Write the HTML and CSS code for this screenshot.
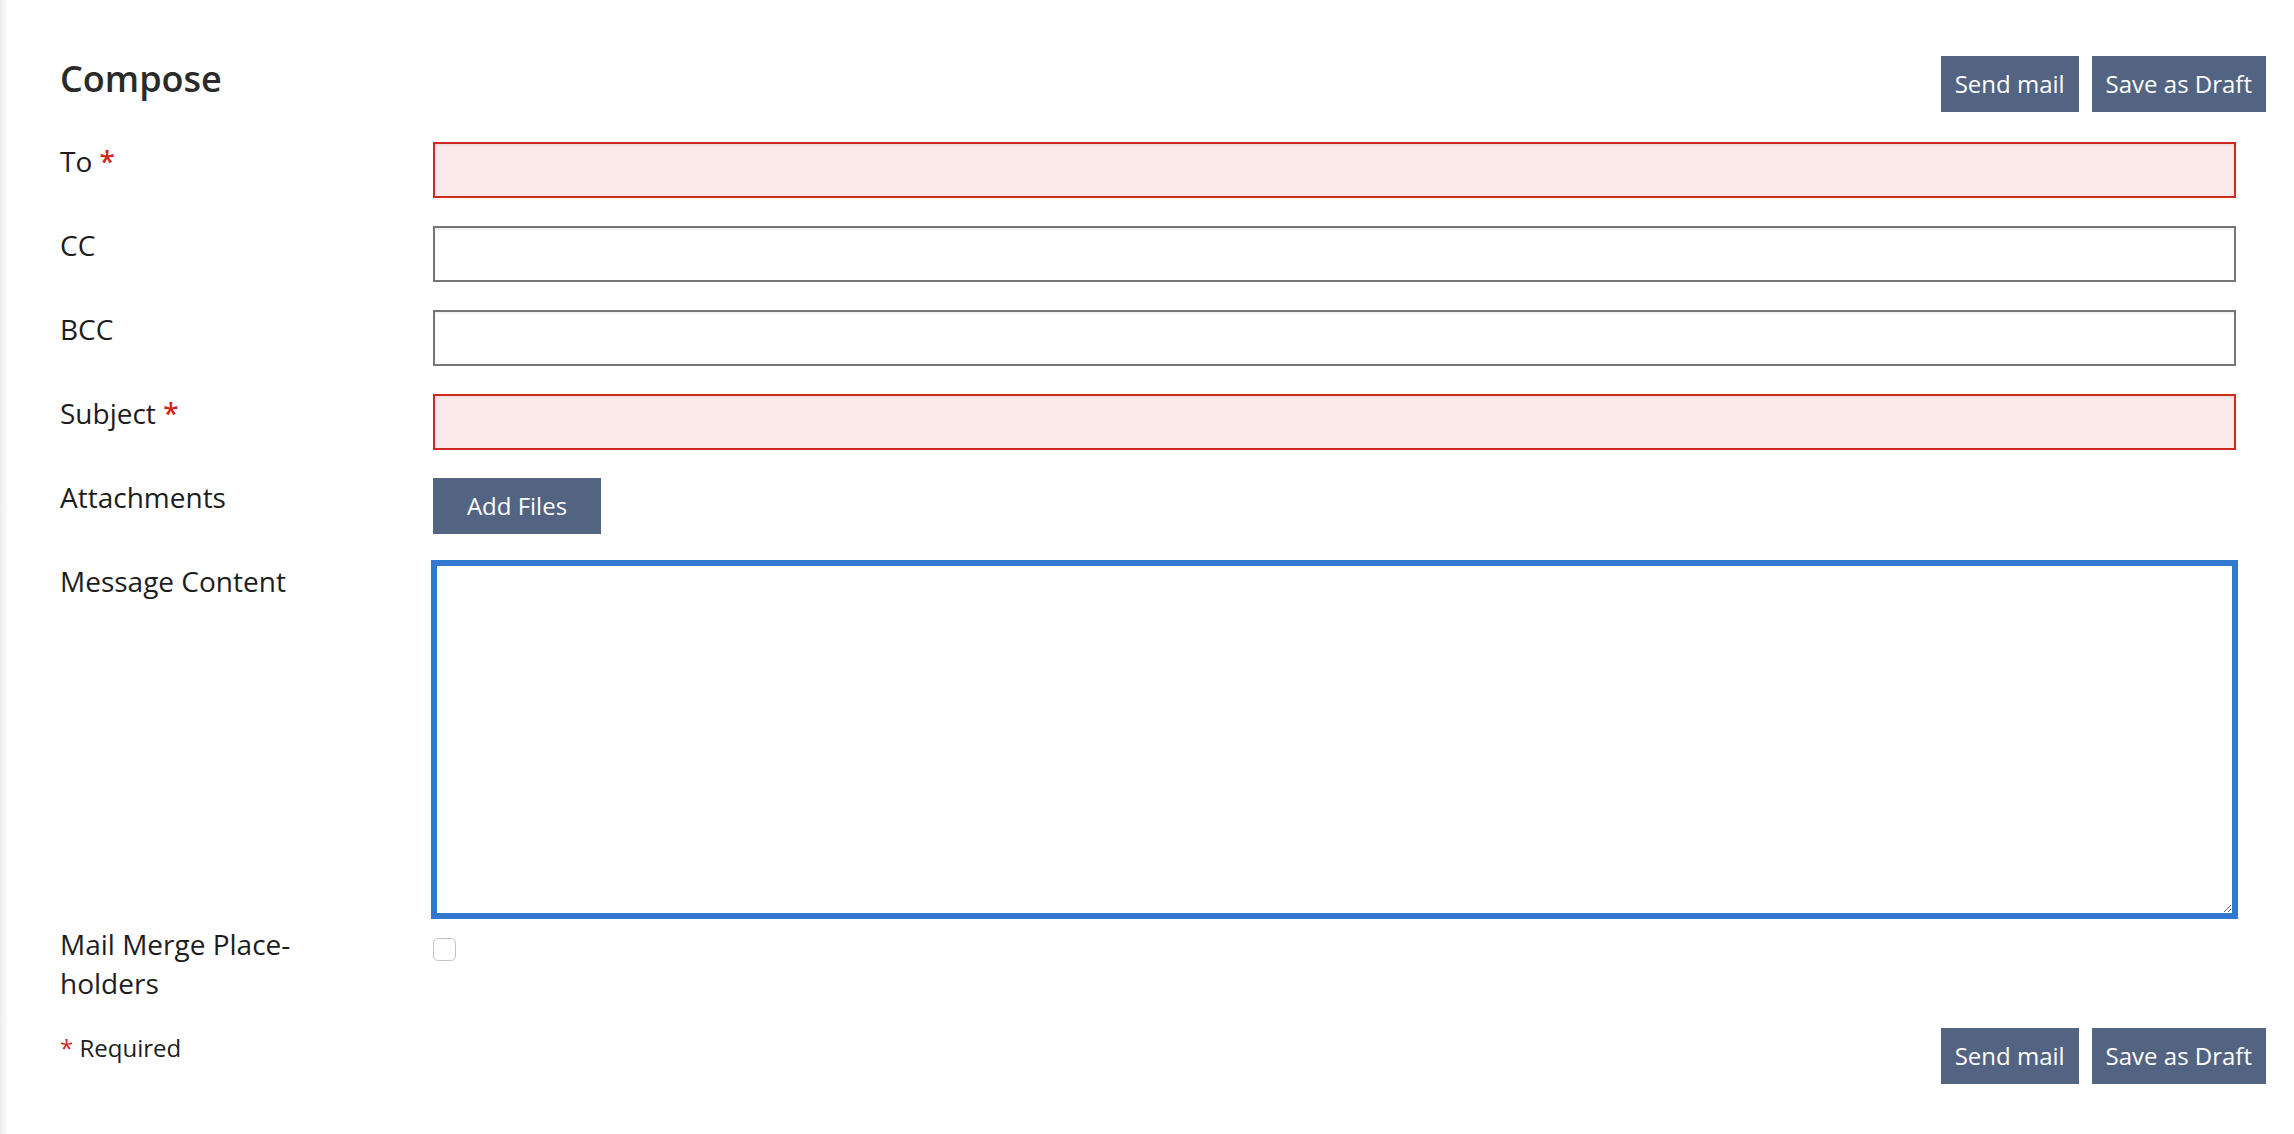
FILE: index.html
```html
<!DOCTYPE html>
<html lang="en">
<head>
<meta charset="utf-8">
<title>Compose</title>
<link rel="stylesheet" href="styles.css">
</head>
<body>
<div class="page">
  <header class="head">
    <h1 class="title">Compose</h1>
    <div class="actions">
      <button class="btn" type="button">Send mail</button>
      <button class="btn" type="button">Save as Draft</button>
    </div>
  </header>
  <form class="form">
    <div class="row">
      <label class="label">To <span class="req">*</span></label>
      <input class="field field-invalid" type="text">
    </div>
    <div class="row">
      <label class="label">CC</label>
      <input class="field" type="text">
    </div>
    <div class="row">
      <label class="label">BCC</label>
      <input class="field" type="text">
    </div>
    <div class="row">
      <label class="label">Subject <span class="req">*</span></label>
      <input class="field field-invalid" type="text">
    </div>
    <div class="row">
      <label class="label">Attachments</label>
      <div><button class="btn btn-files" type="button">Add Files</button></div>
    </div>
    <div class="row row-message">
      <label class="label">Message Content</label>
      <textarea class="area"></textarea>
    </div>
    <div class="row row-merge">
      <label class="label label-merge">Mail Merge Place-<br>holders</label>
      <div><input class="check" type="checkbox"></div>
    </div>
  </form>
  <footer class="foot">
    <div class="required"><span class="req">*</span> Required</div>
    <div class="actions">
      <button class="btn" type="button">Send mail</button>
      <button class="btn" type="button">Save as Draft</button>
    </div>
  </footer>
</div>
</body>
</html>
```
FILE: styles.css
```css
html, body {
  margin: 0;
  padding: 0;
  background: #ffffff;
}

body {
  font-family: "Open Sans", "Noto Sans", "Liberation Sans", sans-serif;
  color: #1d1d1d;
}

.page {
  min-height: 1134px;
  box-sizing: border-box;
  padding: 56px 28px 0 60px;
  background: linear-gradient(to right, #ebebeb 0px, #f6f6f6 4px, #ffffff 10px);
}

.head {
  display: flex;
  justify-content: space-between;
  align-items: flex-start;
  margin-bottom: 30px;
}

.title {
  margin: 0;
  font-size: 36px;
  line-height: 45px;
  font-weight: 600;
  color: #2a2a2a;
}

.actions {
  display: flex;
  gap: 13px;
}

.btn {
  height: 56px;
  padding: 0 14px;
  border: none;
  border-radius: 0;
  background: #526482;
  color: #ffffff;
  font-family: "Open Sans", "Noto Sans", "Liberation Sans", sans-serif;
  font-size: 24px;
  line-height: 56px;
  cursor: pointer;
}

.btn-files {
  width: 168px;
  padding: 0;
}

.form {
  margin-right: 30px;
}

.row {
  display: grid;
  grid-template-columns: 373px 1fr;
  margin-bottom: 28px;
}

.label {
  font-size: 28px;
  line-height: 39px;
  color: #1d1d1d;
}

.req {
  color: #cf2a1f;
  font-weight: 600;
}

.field {
  display: block;
  width: 100%;
  height: 56px;
  box-sizing: border-box;
  margin: 0;
  border: 2px solid #767676;
  border-radius: 0;
  background: #ffffff;
  box-shadow: inset 0 2px 2px rgba(0, 0, 0, 0.05);
  font-family: inherit;
  font-size: 24px;
  padding: 0 10px;
}

.field-invalid {
  border-color: #cf2a1f;
  background: #fbeaea;
}

.row-message {
  margin-bottom: 8px;
}

.area {
  display: block;
  width: 100%;
  height: 355px;
  box-sizing: border-box;
  margin: 0;
  border: 4px solid #3477d1;
  outline: 2px solid #3477d1;
  border-radius: 0;
  background: #ffffff;
  font-family: inherit;
  font-size: 24px;
  padding: 8px;
  resize: both;
}

.row-merge {
  margin-bottom: 25px;
}

.check {
  appearance: none;
  -webkit-appearance: none;
  display: block;
  width: 23px;
  height: 23px;
  margin: 13px 0 0 0;
  border: 1px solid #c4c4c4;
  border-radius: 5px;
  background: #ffffff;
  box-sizing: border-box;
}

.foot {
  display: flex;
  justify-content: space-between;
  align-items: flex-start;
}

.required {
  font-size: 24px;
  line-height: 40px;
  color: #1d1d1d;
}

.required .req {
  font-weight: 400;
}
```
